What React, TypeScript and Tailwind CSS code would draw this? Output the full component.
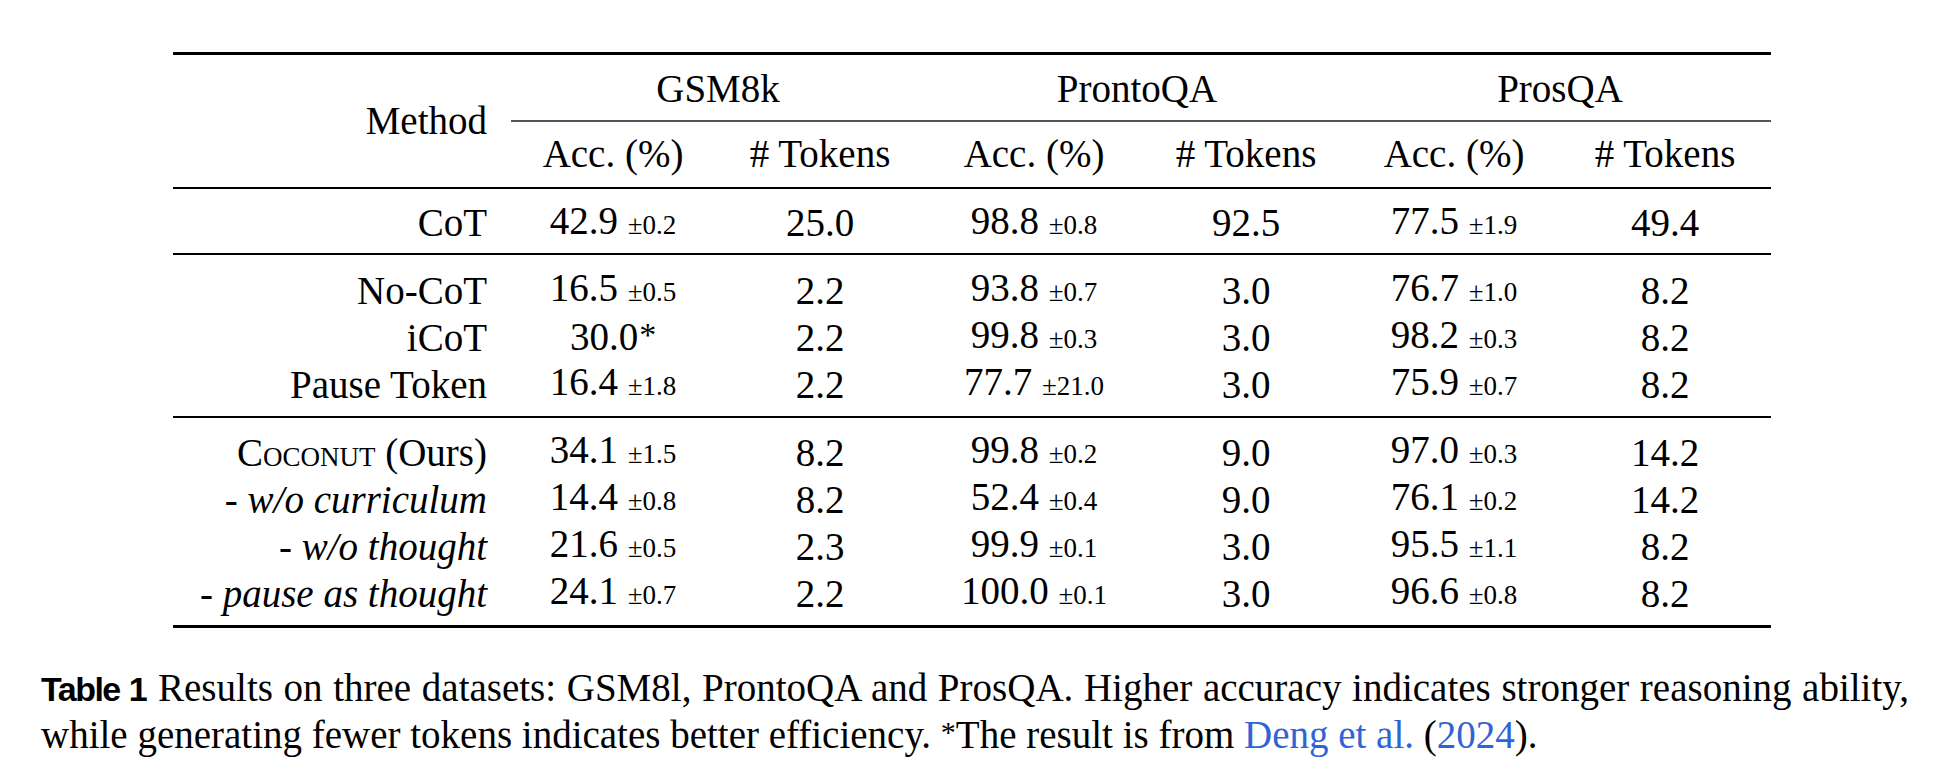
import React from 'react'

type Val = string | [string, string]

type Row = {
  method: React.ReactNode
  cells: Val[]
}

const cols = 'grid grid-cols-[338px_204px_210px_218px_206px_210px_212px]'

const cotRow: Row = {
  method: 'CoT',
  cells: [['42.9', '0.2'], '25.0', ['98.8', '0.8'], '92.5', ['77.5', '1.9'], '49.4'],
}

const baselineRows: Row[] = [
  { method: 'No-CoT', cells: [['16.5', '0.5'], '2.2', ['93.8', '0.7'], '3.0', ['76.7', '1.0'], '8.2'] },
  { method: 'iCoT', cells: ['30.0*', '2.2', ['99.8', '0.3'], '3.0', ['98.2', '0.3'], '8.2'] },
  { method: 'Pause Token', cells: [['16.4', '1.8'], '2.2', ['77.7', '21.0'], '3.0', ['75.9', '0.7'], '8.2'] },
]

const oursRows: Row[] = [
  {
    method: (
      <>
        <span className="[font-variant-caps:small-caps]">Coconut</span> (Ours)
      </>
    ),
    cells: [['34.1', '1.5'], '8.2', ['99.8', '0.2'], '9.0', ['97.0', '0.3'], '14.2'],
  },
  {
    method: (
      <>
        - <i>w/o curriculum</i>
      </>
    ),
    cells: [['14.4', '0.8'], '8.2', ['52.4', '0.4'], '9.0', ['76.1', '0.2'], '14.2'],
  },
  {
    method: (
      <>
        - <i>w/o thought</i>
      </>
    ),
    cells: [['21.6', '0.5'], '2.3', ['99.9', '0.1'], '3.0', ['95.5', '1.1'], '8.2'],
  },
  {
    method: (
      <>
        - <i>pause as thought</i>
      </>
    ),
    cells: [['24.1', '0.7'], '2.2', ['100.0', '0.1'], '3.0', ['96.6', '0.8'], '8.2'],
  },
]

// raised asterisk, like LaTeX's $^*$
function Star() {
  return <span className="text-[34px] relative -top-[4px] ml-[1px]">*</span>
}

function Cell({ v }: { v: Val }) {
  if (typeof v === 'string') {
    if (v.endsWith('*')) {
      return (
        <div className="text-center">
          {v.slice(0, -1)}
          <Star />
        </div>
      )
    }
    return <div className="text-center">{v}</div>
  }
  return (
    <div className="text-center">
      {v[0]} <span className="text-[27px]">±{v[1]}</span>
    </div>
  )
}

function TableRow({ row }: { row: Row }) {
  return (
    <div className={`${cols} h-[47px] items-center`}>
      <div className="text-right pr-[24px]">{row.method}</div>
      {row.cells.map((c, i) => (
        <Cell key={i} v={c} />
      ))}
    </div>
  )
}

export default function App() {
  return (
    <div className="w-[1936px] h-[774px] bg-white text-black font-['Liberation_Serif',serif] text-[39px] leading-[47px] overflow-hidden">
      <div className="ml-[173px] w-[1598px] pt-[52px]">
        {/* top rule */}
        <div className="h-[3px] bg-black" />

        {/* header */}
        <div className="flex h-[132px]">
          <div className="w-[338px] flex items-center justify-end pr-[24px] pb-[2px]">Method</div>
          <div className="flex-1 flex flex-col">
            <div className="grid grid-cols-[414px_424px_422px] h-[65px] items-center pt-[2px]">
              <div className="text-center">GSM8k</div>
              <div className="text-center">ProntoQA</div>
              <div className="text-center">ProsQA</div>
            </div>
            <div className="h-[1.5px] bg-[#555]" />
            <div className="grid grid-cols-[204px_210px_218px_206px_210px_212px] flex-1 items-center pb-[2px]">
              <div className="text-center">Acc. (%)</div>
              <div className="text-center"># Tokens</div>
              <div className="text-center">Acc. (%)</div>
              <div className="text-center"># Tokens</div>
              <div className="text-center">Acc. (%)</div>
              <div className="text-center"># Tokens</div>
            </div>
          </div>
        </div>

        <div className="h-[2px] bg-black" />

        <div className="h-[64px] flex flex-col justify-center pb-[2px]">
          <TableRow row={cotRow} />
        </div>

        <div className="h-[2px] bg-black" />

        <div className="pt-[9px] pb-[11px]">
          {baselineRows.map((r, i) => (
            <TableRow key={i} row={r} />
          ))}
        </div>

        <div className="h-[2px] bg-black" />

        <div className="pt-[8px] pb-[11px]">
          {oursRows.map((r, i) => (
            <TableRow key={i} row={r} />
          ))}
        </div>

        <div className="h-[3px] bg-black" />
      </div>

      {/* caption */}
      <div className="ml-[41px] w-[1868px] mt-[36px]">
        <div className="text-justify [text-align-last:justify]">
          <span className="font-['Liberation_Sans',sans-serif] font-bold text-[34px] tracking-[-1.5px] mr-[12px]">Table 1</span>
          Results on three datasets: GSM8l, ProntoQA and ProsQA. Higher accuracy indicates stronger reasoning ability,
        </div>
        <div className="-mt-[2px]">
          while generating fewer tokens indicates better efficiency.{' '}
          <span className="text-[30px] relative -top-[6px]">*</span>The result is from{' '}
          <span className="text-[#2f64d6]">Deng et al.</span> (<span className="text-[#2f64d6]">2024</span>).
        </div>
      </div>
    </div>
  )
}
